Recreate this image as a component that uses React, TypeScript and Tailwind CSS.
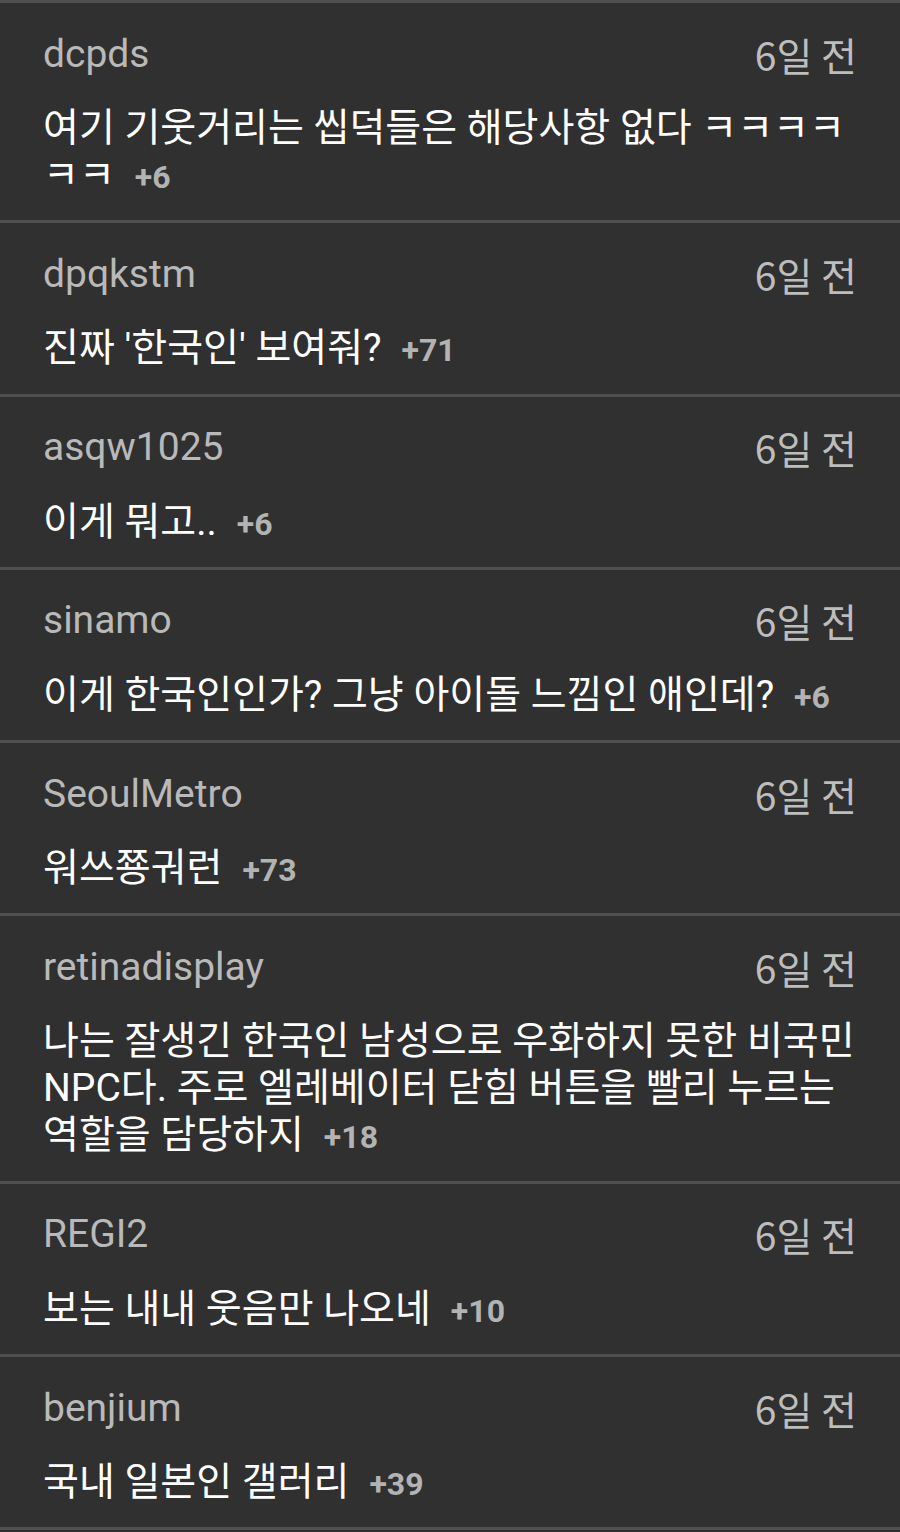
import React from 'react';

type Comment = {
  user: string;
  date: string;
  text: string;
  score: number;
};

const comments: Comment[] = [
  { user: 'dcpds', date: '6일 전', text: '여기 기웃거리는 씹덕들은 해당사항 없다 ㅋㅋㅋㅋㅋㅋ', score: 6 },
  { user: 'dpqkstm', date: '6일 전', text: "진짜 '한국인' 보여줘?", score: 71 },
  { user: 'asqw1025', date: '6일 전', text: '이게 뭐고..', score: 6 },
  { user: 'sinamo', date: '6일 전', text: '이게 한국인인가? 그냥 아이돌 느낌인 애인데?', score: 6 },
  { user: 'SeoulMetro', date: '6일 전', text: '워쓰쭁궈런', score: 73 },
  {
    user: 'retinadisplay',
    date: '6일 전',
    text: '나는 잘생긴 한국인 남성으로 우화하지 못한 비국민 NPC다. 주로 엘레베이터 닫힘 버튼을 빨리 누르는 역할을 담당하지',
    score: 18,
  },
  { user: 'REGI2', date: '6일 전', text: '보는 내내 웃음만 나오네', score: 10 },
  { user: 'benjium', date: '6일 전', text: '국내 일본인 갤러리', score: 39 },
];

function CommentRow({ comment }: { comment: Comment }) {
  return (
    <li className="border-t-[3px] border-[#4f4f4f] px-[43px] pt-[27px] pb-[21.3px]">
      <div className="flex h-[48px] items-center justify-between">
        <span className="text-[39px] leading-none text-[#b9b9b9]">{comment.user}</span>
        <span className="text-[39px] leading-none text-[#bdbdbd] [font-family:'Noto_Sans_CJK_KR',sans-serif]">
          {comment.date}
        </span>
      </div>
      <p className="mt-[27px] text-[39px] leading-[47px] text-white">
        {comment.text}
        <span className="ml-[20px] text-[32px] leading-none font-bold text-[#b3b3b3]">+{comment.score}</span>
      </p>
    </li>
  );
}

export default function App() {
  return (
    <div className="min-h-screen bg-[#303030] [font-family:Roboto,'Noto_Sans_CJK_KR',sans-serif]">
      <ul className="border-b-[3px] border-[#4f4f4f]">
        {comments.map((c) => (
          <CommentRow key={c.user} comment={c} />
        ))}
      </ul>
    </div>
  );
}
